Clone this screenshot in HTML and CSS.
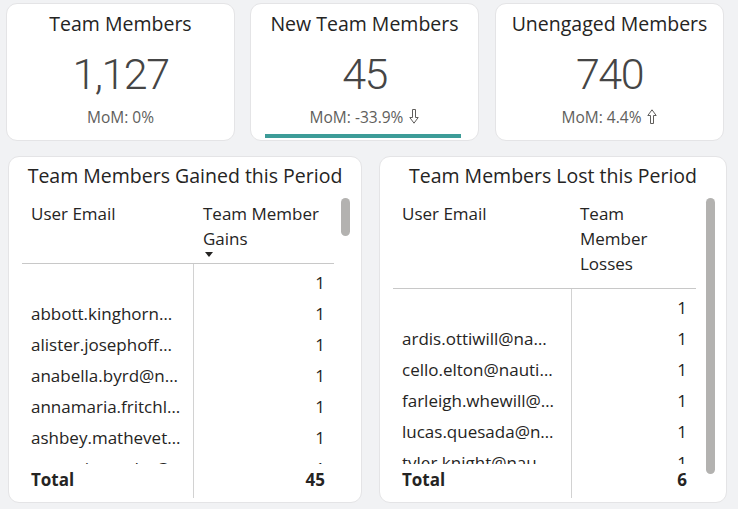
FILE: index.html
```html
<!DOCTYPE html>
<html lang="en">
<head>
<meta charset="utf-8">
<title>Team Members Report</title>
<link rel="stylesheet" href="styles.css">
</head>
<body>
<div class="page">
  <div class="kpi-row">
    <div class="card kpi">
      <div class="kpi-title">Team Members</div>
      <div class="kpi-value">1,127</div>
      <div class="kpi-mom">MoM: 0%</div>
    </div>
    <div class="card kpi">
      <div class="kpi-title">New Team Members</div>
      <div class="kpi-value">45</div>
      <div class="kpi-mom">MoM: -33.9% <svg class="arrow" width="10" height="15" viewBox="0 0 10 15"><path d="M3.5 0.5H6.5V8.5H9.2L5 14.2L0.8 8.5H3.5Z" fill="none" stroke="#605e5c" stroke-width="1"/></svg></div>
      <div class="kpi-bar"></div>
    </div>
    <div class="card kpi">
      <div class="kpi-title">Unengaged Members</div>
      <div class="kpi-value">740</div>
      <div class="kpi-mom">MoM: 4.4% <svg class="arrow" width="10" height="15" viewBox="0 0 10 15"><path d="M3.5 14.5H6.5V6.5H9.2L5 0.8L0.8 6.5H3.5Z" fill="none" stroke="#605e5c" stroke-width="1"/></svg></div>
    </div>
  </div>

  <div class="table-row">
    <div class="card tcard gained">
      <div class="tc-title">Team Members Gained this Period</div>
      <div class="tc-main">
        <div class="grid">
          <div class="ghead">
            <div class="hcell c1">User Email</div>
            <div class="hcell c2 sorted">Team Member<br>Gains<div class="sort"><svg width="8" height="5" viewBox="0 0 8 5"><path d="M0 0H8L4 5Z" fill="#252423"/></svg></div></div>
          </div>
          <div class="gbody">
            <div class="grow"><div class="cell c1"></div><div class="cell c2">1</div></div>
            <div class="grow"><div class="cell c1">abbott.kinghorn…</div><div class="cell c2">1</div></div>
            <div class="grow"><div class="cell c1">alister.josephoff…</div><div class="cell c2">1</div></div>
            <div class="grow"><div class="cell c1">anabella.byrd@n…</div><div class="cell c2">1</div></div>
            <div class="grow"><div class="cell c1">annamaria.fritchl…</div><div class="cell c2">1</div></div>
            <div class="grow"><div class="cell c1">ashbey.mathevet…</div><div class="cell c2">1</div></div>
            <div class="grow"><div class="cell c1">augustin.carder@…</div><div class="cell c2">1</div></div>
          </div>
          <div class="gtotal"><div class="cell c1">Total</div><div class="cell c2">45</div></div>
        </div>
        <div class="track"><div class="thumb"></div></div>
      </div>
    </div>

    <div class="card tcard lost">
      <div class="tc-title">Team Members Lost this Period</div>
      <div class="tc-main">
        <div class="grid">
          <div class="ghead">
            <div class="hcell c1">User Email</div>
            <div class="hcell c2">Team<br>Member<br>Losses</div>
          </div>
          <div class="gbody">
            <div class="grow"><div class="cell c1"></div><div class="cell c2">1</div></div>
            <div class="grow"><div class="cell c1">ardis.ottiwill@na…</div><div class="cell c2">1</div></div>
            <div class="grow"><div class="cell c1">cello.elton@nauti…</div><div class="cell c2">1</div></div>
            <div class="grow"><div class="cell c1">farleigh.whewill@…</div><div class="cell c2">1</div></div>
            <div class="grow"><div class="cell c1">lucas.quesada@n…</div><div class="cell c2">1</div></div>
            <div class="grow"><div class="cell c1">tyler.knight@nau…</div><div class="cell c2">1</div></div>
          </div>
          <div class="gtotal"><div class="cell c1">Total</div><div class="cell c2">6</div></div>
        </div>
        <div class="track"><div class="thumb"></div></div>
      </div>
    </div>
  </div>
</div>
</body>
</html>
```
FILE: styles.css
```css
* { box-sizing: border-box; }
html, body { margin: 0; padding: 0; }
body {
  width: 738px;
  height: 509px;
  overflow: hidden;
  background: #f1f2f4;
  font-family: "Open Sans", "Noto Sans", sans-serif;
  color: #252423;
}
.page { padding-top: 3px; }

.card {
  background: #ffffff;
  border: 1px solid #e4e4e6;
  border-radius: 11px;
}

/* KPI cards */
.kpi-row {
  display: flex;
  padding-left: 6px;
}
.kpi-row .kpi + .kpi { margin-left: 15px; }
.kpi-row .kpi:last-child { margin-left: 16px; }
.kpi {
  width: 229px;
  height: 138px;
  display: flex;
  flex-direction: column;
  align-items: center;
  padding-top: 7px;
}
.kpi-title {
  font-size: 19.5px;
  line-height: 26px;
  color: #252423;
  white-space: nowrap;
}
.kpi-value {
  margin-top: 12px;
  font-family: Roboto, "Liberation Sans", sans-serif;
  font-weight: 300;
  font-size: 43px;
  line-height: 50px;
  letter-spacing: -1.5px;
  color: #454545;
}
.kpi-mom {
  margin-top: 7px;
  font-size: 15.5px;
  line-height: 22px;
  color: #605e5c;
  white-space: nowrap;
  display: flex;
  align-items: center;
}
.arrow {
  display: block;
  margin-left: 6px;
  margin-top: -1px;
}
.kpi-bar {
  align-self: flex-start;
  margin-top: 6px;
  margin-left: 14px;
  width: 196px;
  height: 4px;
  background: #3d9c98;
}

/* Table cards */
.table-row {
  display: flex;
  padding-left: 8px;
  margin-top: 15px;
}
.tcard {
  height: 347px;
  padding: 0 13px 4px 13px;
  display: flex;
  flex-direction: column;
}
.gained { width: 354px; }
.lost { width: 348px; margin-left: 17px; }

.tc-title {
  text-align: center;
  font-size: 19.5px;
  line-height: 26px;
  padding-top: 6px;
  white-space: nowrap;
}
.tc-main {
  margin-top: 9px;
  flex: 1;
  min-height: 0;
  display: flex;
}
.grid {
  display: flex;
  flex-direction: column;
  height: 100%;
}
.gained .grid { width: 312px; }
.lost .grid { width: 303px; }
.gained .c1 { width: 171px; }
.gained .c2 { width: 141px; }
.lost .c1 { width: 178px; }
.lost .c2 { width: 125px; }

.ghead {
  display: flex;
  border-bottom: 1px solid #c8c8c8;
  font-size: 17px;
  line-height: 25px;
}
.hcell {
  padding: 3px 9px 12px 9px;
}
.gained .hcell.c2 { padding-left: 10px; }
.hcell.sorted { padding-bottom: 0; }
.sort {
  height: 12px;
  padding-left: 2px;
  padding-top: 1px;
  line-height: 0;
}
.sort svg { display: block; }

.gbody {
  flex: 1;
  min-height: 0;
  overflow: hidden;
}
.grow, .gtotal {
  display: flex;
  font-size: 17px;
}
.grow { height: 31px; line-height: 31px; }
.grow:first-child { height: 34px; padding-top: 3px; }
.gtotal {
  height: 34px;
  line-height: 30px;
  font-weight: 700;
  flex: none;
}
.gtotal .cell { padding-top: 1px; }
.cell {
  padding: 0 9px;
  white-space: nowrap;
  overflow: hidden;
}
.cell.c2 {
  text-align: right;
  border-left: 1px solid #d2d2d2;
}
.grow:first-child .cell.c2 { margin-top: -3px; padding-top: 3px; height: 34px; }

.track { flex: none; }
.gained .track { margin-left: 7px; width: 9px; }
.lost .track { margin-left: 10px; width: 9px; }
.thumb {
  width: 9px;
  background: #b3b2b0;
  border-radius: 5px;
}
.gained .thumb { height: 38px; }
.lost .thumb { height: 276px; }
```
